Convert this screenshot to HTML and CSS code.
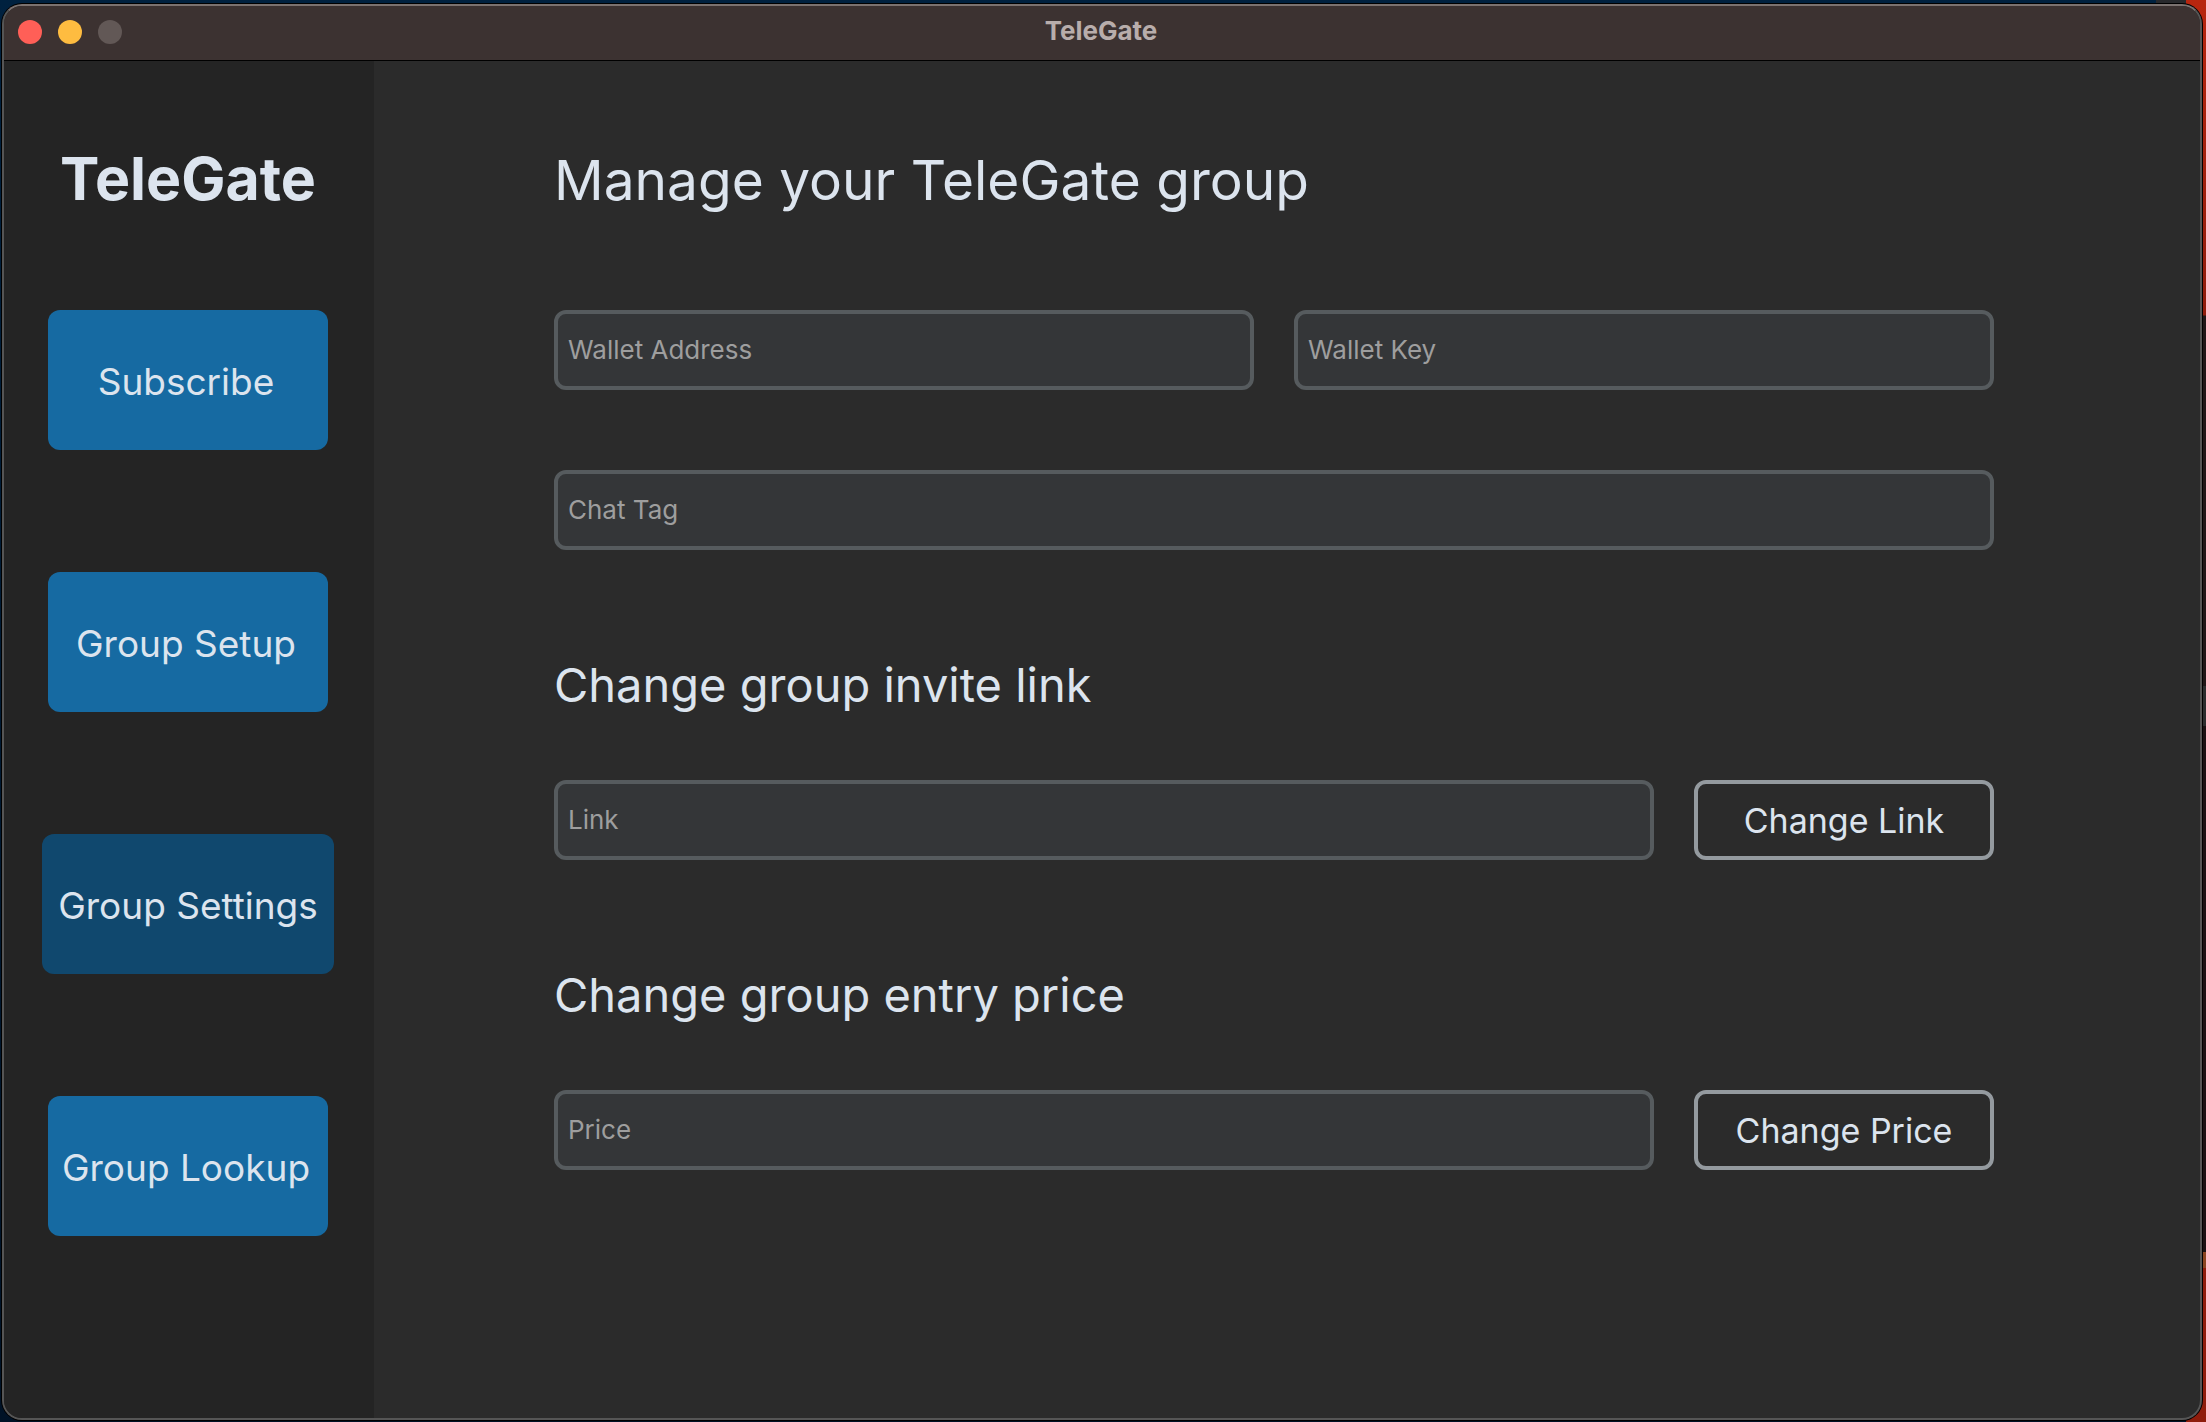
FILE: index.html
```html
<!DOCTYPE html>
<html lang="en">
<head>
  <meta charset="utf-8">
  <title>TeleGate</title>
  <link rel="stylesheet" href="styles.css">
</head>
<body>
  <div class="window">
    <header class="titlebar">
      <div class="lights">
        <button class="light light-close" aria-label="Close"></button>
        <button class="light light-minimize" aria-label="Minimize"></button>
        <button class="light light-zoom" aria-label="Zoom" disabled></button>
      </div>
      <span class="titlebar-text">TeleGate</span>
    </header>
    <div class="body">
      <aside class="sidebar">
        <div class="brand">TeleGate</div>
        <nav class="nav">
          <button class="nav-button">Subscribe</button>
          <button class="nav-button">Group Setup</button>
          <button class="nav-button nav-button-active" aria-current="page">Group Settings</button>
          <button class="nav-button">Group Lookup</button>
        </nav>
      </aside>
      <main class="content">
        <h1 class="title">Manage your TeleGate group</h1>
        <div class="fields">
          <div class="row">
            <input class="field" type="text" placeholder="Wallet Address" aria-label="Wallet Address">
            <input class="field" type="text" placeholder="Wallet Key" aria-label="Wallet Key">
          </div>
          <div class="row">
            <input class="field" type="text" placeholder="Chat Tag" aria-label="Chat Tag">
          </div>
        </div>
        <section class="section">
          <h2 class="subtitle">Change group invite link</h2>
          <form class="row">
            <input class="field" type="text" placeholder="Link" aria-label="Link">
            <button class="action" type="button">Change Link</button>
          </form>
        </section>
        <section class="section">
          <h2 class="subtitle">Change group entry price</h2>
          <form class="row">
            <input class="field" type="text" placeholder="Price" aria-label="Price">
            <button class="action" type="button">Change Price</button>
          </form>
        </section>
      </main>
    </div>
  </div>
</body>
</html>
```
FILE: styles.css
```css
* {
  box-sizing: border-box;
}

body {
  margin: 0;
  min-height: 100vh;
  display: flex;
  padding: 4px 4px 2px 2px;
  font-family: Inter, "Liberation Sans", sans-serif;
  color: #dce4ee;
  /* desktop behind the window: red wallpaper and a dark window at the right edge */
  background:
    linear-gradient(#28292c, #28292c) right 20px top / 30px 4px no-repeat,
    linear-gradient(#b8260f 0, #8f1c0c 315px, #1f1617 316px 686px, #2b2d2e 686px 726px, #1a1113 726px 1252px, #8a4420 1252px 1268px, #8f1c0c 1268px) right top / 20px 100% no-repeat,
    linear-gradient(#00213f, #001226);
}

.window {
  flex: 1;
  display: flex;
  flex-direction: column;
  border: 2px solid #555;
  border-top-color: #7b7270;
  border-radius: 20px;
  background: #2b2b2b;
  box-shadow: 0 0 0 1px #000;
  overflow: hidden;
}

.titlebar {
  display: grid;
  grid-template-columns: 1fr auto 1fr;
  align-items: center;
  height: 55px;
  padding: 0 16px 2px 14px;
  background: #3c3231;
  border-bottom: 1px solid #000;
}

.lights {
  display: flex;
  gap: 16px;
}

.light {
  width: 24px;
  height: 24px;
  padding: 0;
  border: 0;
  border-radius: 50%;
}

.light-close {
  background: #ff5f57;
}

.light-minimize {
  background: #febc40;
}

.light-zoom {
  background: #625856;
}

.titlebar-text {
  padding-bottom: 2px;
  font-size: 26px;
  line-height: 32px;
  font-weight: 700;
  color: #b8adab;
}

.body {
  flex: 1;
  display: flex;
}

.sidebar {
  width: 370px;
  padding: 82px 2px 0 0;
  background: #242424;
}

.brand {
  font-size: 59px;
  line-height: 72px;
  font-weight: 700;
  text-align: center;
}

.nav {
  display: flex;
  flex-direction: column;
  align-items: center;
  gap: 122px;
  padding-top: 95px;
}

.nav-button {
  min-width: 280px;
  height: 140px;
  padding: 4px 4px 0 0;
  border: 0;
  border-radius: 12px;
  background: #166aa2;
  color: inherit;
  font: 400 37px/48px Inter, "Liberation Sans", sans-serif;
  white-space: nowrap;
}

.nav-button-active {
  min-width: 292px;
  padding-right: 0;
  background: #10486e;
}

.content {
  flex: 1;
  padding: 83px 206px 80px 180px;
}

.title {
  margin: 0 0 94px;
  font-size: 55px;
  line-height: 72px;
  font-weight: 400;
}

.fields {
  display: flex;
  flex-direction: column;
  gap: 80px;
}

.row {
  display: flex;
  gap: 40px;
}

.field {
  flex: 1;
  min-width: 0;
  height: 80px;
  padding: 0 10px 2px;
  border: 4px solid #565b5e;
  border-radius: 12px;
  background: #343638;
  color: inherit;
  font: 400 26px/32px Inter, "Liberation Sans", sans-serif;
}

.field::placeholder {
  color: #9e9e9e;
  opacity: 1;
}

.section {
  padding-top: 105px;
}

.subtitle {
  margin: 0 0 65px;
  font-size: 47px;
  line-height: 60px;
  font-weight: 400;
}

.action {
  width: 300px;
  height: 80px;
  padding: 2px 0 0;
  border: 4px solid #949a9f;
  border-radius: 12px;
  background: transparent;
  color: inherit;
  font: 400 34px/44px Inter, "Liberation Sans", sans-serif;
}
```
